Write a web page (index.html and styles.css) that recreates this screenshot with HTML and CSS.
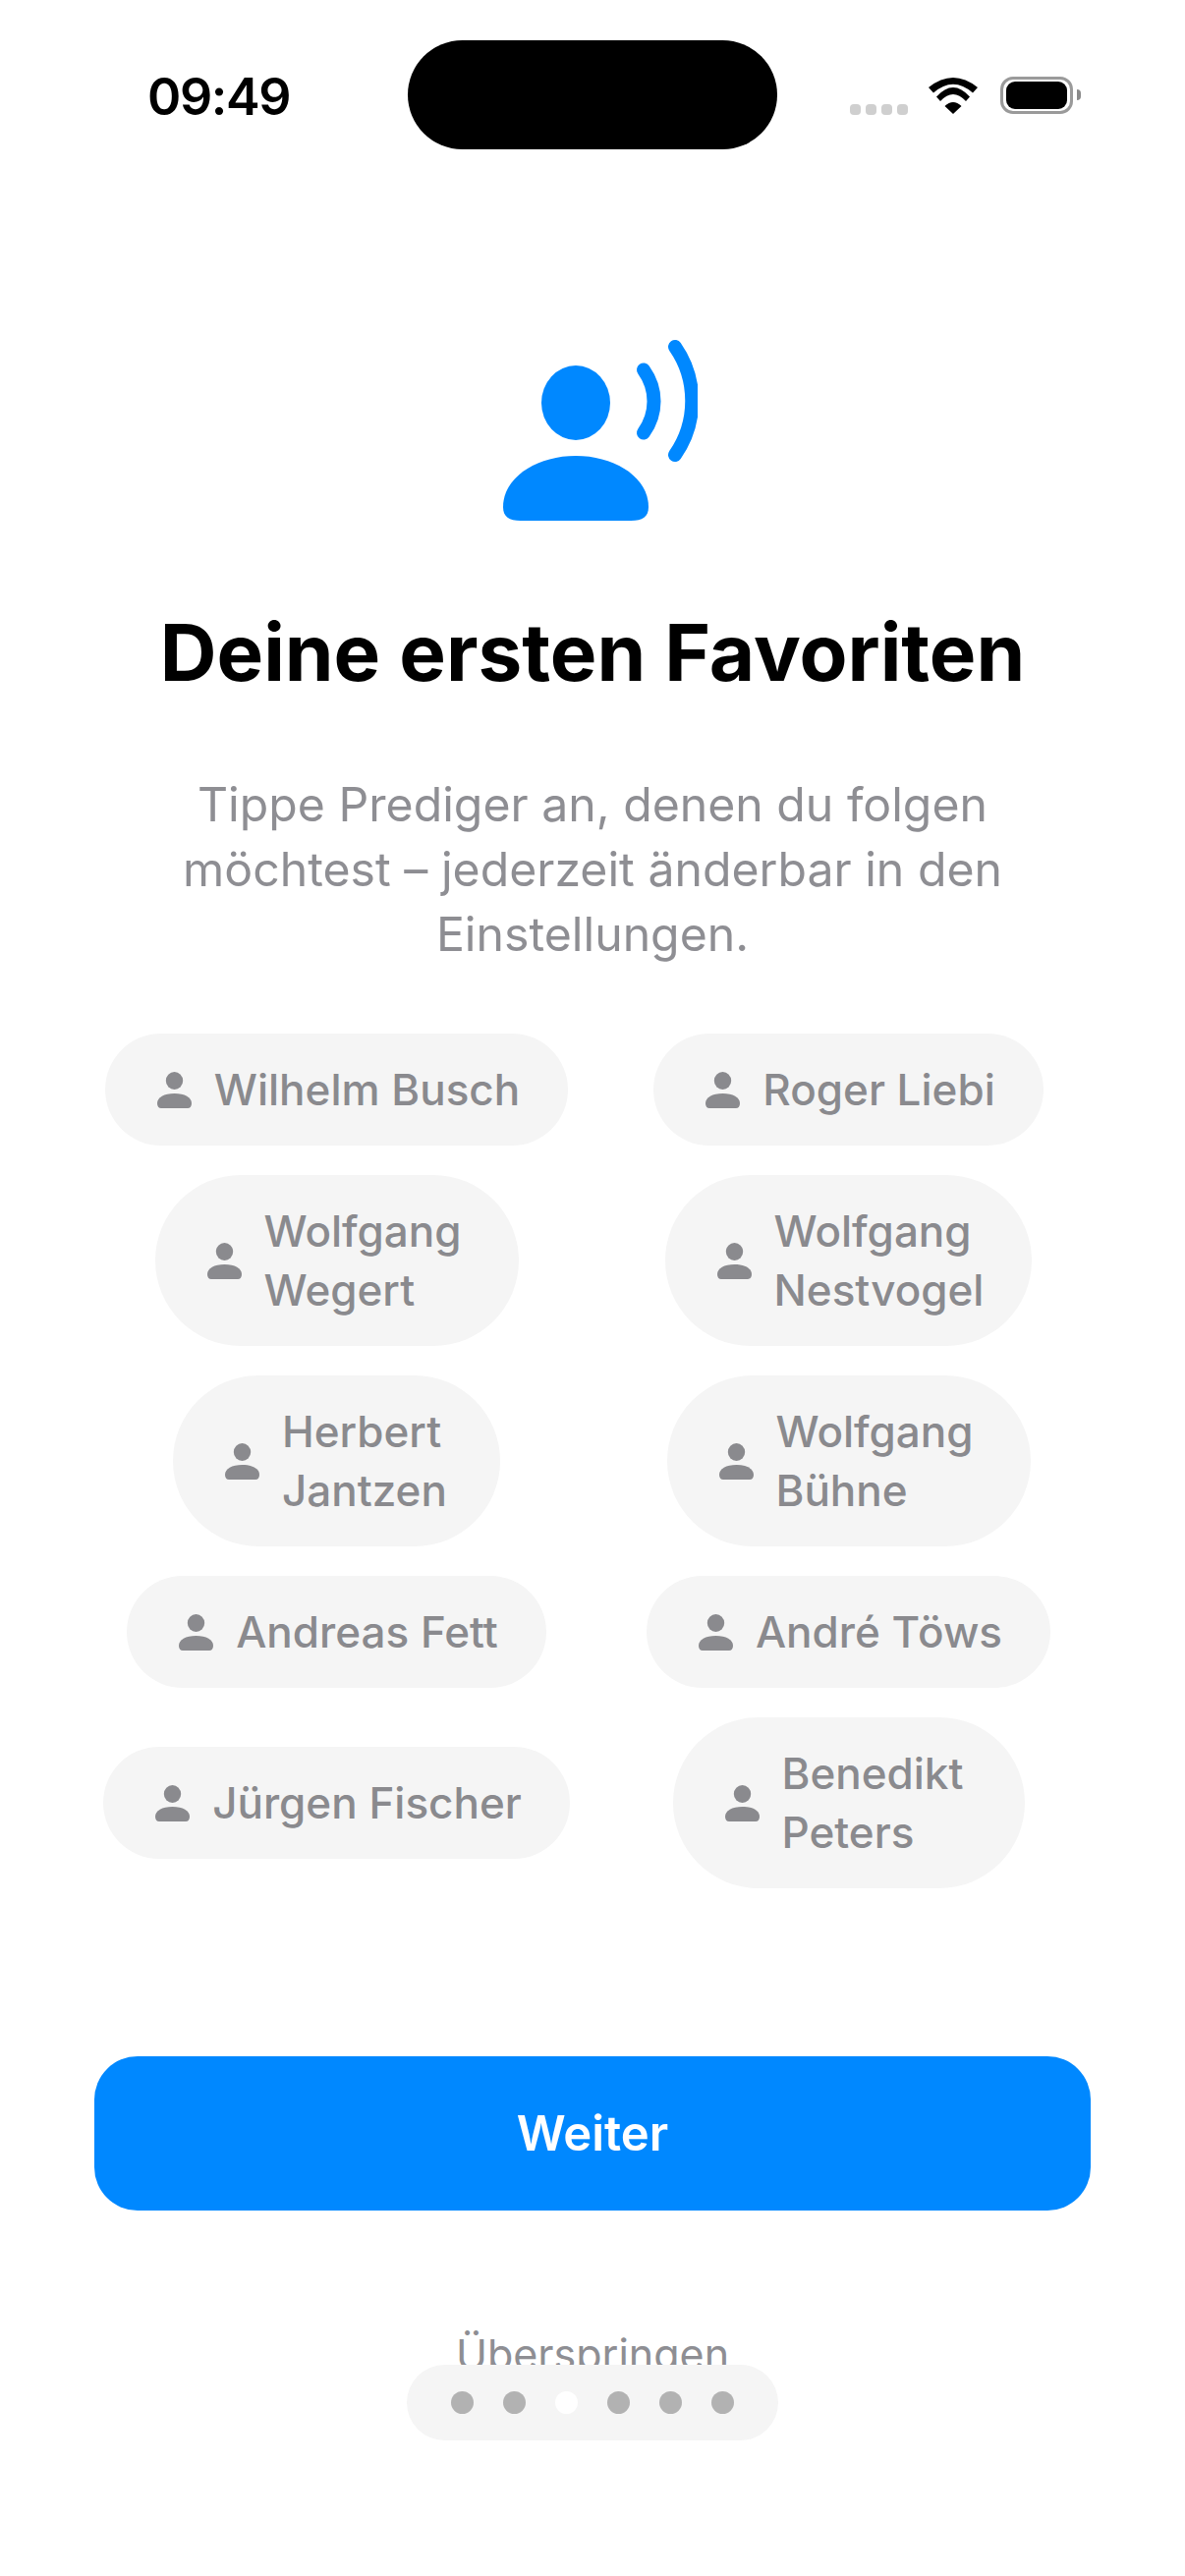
FILE: index.html
```html
<!DOCTYPE html>
<html lang="de">
<head>
<meta charset="utf-8">
<title>Deine ersten Favoriten</title>
<link rel="stylesheet" href="styles.css">
</head>
<body>
<div class="screen">
  <header class="status">
    <span class="time">09:49</span>
    <div class="island"></div>
    <div class="status-icons">
      <div class="signal"><i></i><i></i><i></i><i></i></div>
      <svg class="wifi" width="50" height="37" viewBox="0 0 50 37"><path d="M0 10Q25 -10 50 10L45 15.500Q25 -2 5 15.500ZM8 19.500Q25 0.500 42 19.500L38 24Q25 10 12 24ZM16.500 29Q25 21 33.500 29L25 37Z" fill="#000"/></svg>
      <div class="battery"><div class="battery-fill"></div></div>
      <div class="battery-nub"></div>
    </div>
  </header>
  <main class="content">
    <svg class="hero" width="200" height="196" viewBox="0 0 200 196">
      <ellipse cx="76" cy="72" rx="35" ry="38" fill="#0088ff"/>
      <path d="M2 178C2 148 36 126 76 126S150 148 150 178C150 188 144 192 132 192H20C8 192 2 188 2 178Z" fill="#0088ff"/>
      <path d="M145 38.500C159 58 159 83 145 102.500" fill="none" stroke="#0088ff" stroke-width="14" stroke-linecap="round"/>
      <path d="M177 15C200 48 200 92 177 125" fill="none" stroke="#0088ff" stroke-width="14" stroke-linecap="round"/>
    </svg>
    <h1 class="title">Deine ersten Favoriten</h1>
    <p class="lead">Tippe Prediger an, denen du folgen möchtest – jederzeit änderbar in den Einstellungen.</p>
    <div class="chips">
      <div class="chip"><svg class="person" viewBox="0 0 35 37"><use href="#person"/></svg><span>Wilhelm Busch</span></div>
      <div class="chip"><svg class="person" viewBox="0 0 35 37"><use href="#person"/></svg><span>Roger Liebi</span></div>
      <div class="chip"><svg class="person" viewBox="0 0 35 37"><use href="#person"/></svg><span class="name-wide">Wolfgang<br>Wegert</span></div>
      <div class="chip"><svg class="person" viewBox="0 0 35 37"><use href="#person"/></svg><span>Wolfgang<br>Nestvogel</span></div>
      <div class="chip"><svg class="person" viewBox="0 0 35 37"><use href="#person"/></svg><span class="name-narrow">Herbert<br>Jantzen</span></div>
      <div class="chip"><svg class="person" viewBox="0 0 35 37"><use href="#person"/></svg><span class="name-wide">Wolfgang<br>Bühne</span></div>
      <div class="chip"><svg class="person" viewBox="0 0 35 37"><use href="#person"/></svg><span>Andreas Fett</span></div>
      <div class="chip"><svg class="person" viewBox="0 0 35 37"><use href="#person"/></svg><span>André Töws</span></div>
      <div class="chip"><svg class="person" viewBox="0 0 35 37"><use href="#person"/></svg><span>Jürgen Fischer</span></div>
      <div class="chip"><svg class="person" viewBox="0 0 35 37"><use href="#person"/></svg><span class="name-mid">Benedikt<br>Peters</span></div>
    </div>
    <button class="next">Weiter</button>
    <div class="skip">Überspringen</div>
  </main>
  <nav class="pager">
    <i class="dot"></i><i class="dot"></i><i class="dot active"></i><i class="dot"></i><i class="dot"></i><i class="dot"></i>
  </nav>
  <svg class="defs" width="0" height="0"><defs><g id="person"><ellipse cx="17.500" cy="9" rx="8.700" ry="9" fill="#8a8a8e"/><path d="M0 32C0 26 7 22 17.500 22S35 26 35 32C35 35 33.500 37 31 37H4C1.500 37 0 35 0 32Z" fill="#8a8a8e"/></g></defs></svg>
</div>
</body>
</html>
```

FILE: styles.css
```css
* { box-sizing: border-box; }
html, body { margin: 0; padding: 0; background: #fff; }
.screen {
  position: relative;
  width: 1206px;
  height: 2622px;
  overflow: hidden;
  font-family: Inter, "Liberation Sans", sans-serif;
}
.status {
  position: relative;
  height: 152px;
  padding: 41px 0 0 150px;
}
.time {
  display: block;
  font-size: 52px;
  letter-spacing: -1.400px;
  font-weight: 600;
  line-height: 56px;
  margin-top: 30px;
  color: #000;
}
.island {
  position: absolute;
  left: 415px;
  top: 41px;
  width: 376px;
  height: 111px;
  border-radius: 56px;
  background: #000;
}
.status-icons {
  position: absolute;
  left: 865px;
  top: 78px;
  display: flex;
  align-items: flex-start;
}
.signal { display: flex; gap: 5px; margin: 28px 0 0 0; }
.signal i { width: 11px; height: 11px; border-radius: 4px; background: #cfcfcf; }
.wifi { margin: 1px 0 0 21px; }
.battery {
  width: 74px;
  height: 38px;
  margin-left: 23px;
  padding: 2px 3px;
  border: 3px solid #9a9a9a;
  border-radius: 13px;
}
.battery-fill { width: 100%; height: 100%; border-radius: 9px; background: #000; }
.battery-nub { width: 4px; height: 11px; margin: 13px 0 0 4px; border-radius: 0 4px 4px 0; background: #8a8a8a; }
.content {
  display: flex;
  flex-direction: column;
  align-items: center;
}
.hero { margin: 186px 0 0 14px; display: block; }
.title {
  margin: 84px 0 0;
  font-size: 80px;
  line-height: 92px;
  font-weight: 700;
  color: #000;
}
.lead {
  width: 900px;
  margin: 76px 0 0;
  font-size: 48.200px;
  line-height: 66px;
  text-align: center;
  color: #8e8e93;
}
.chips {
  display: grid;
  grid-template-columns: 490px 490px;
  column-gap: 31px;
  row-gap: 30px;
  justify-items: center;
  align-items: center;
  margin-top: 68px;
}
.chip {
  display: flex;
  align-items: center;
  gap: 23px;
  padding: 27px 49px 27px 53px;
  border-radius: 999px;
  background: #f5f5f5;
  font-size: 44px;
  line-height: 60px;
  font-weight: 500;
  color: #8a8a8e;
}
.name-wide { min-width: 210px; }
.name-mid { min-width: 198px; }
.name-narrow { min-width: 173px; }
.person { width: 35px; height: 37px; flex: none; }
.next {
  width: 1014px;
  height: 157px;
  margin-top: 171px;
  border: 0;
  border-radius: 44px;
  background: #0088ff;
  color: #fff;
  font-family: inherit;
  font-size: 49px;
  font-weight: 600;
}
.skip {
  margin-top: 118px;
  font-size: 43px;
  line-height: 56px;
  color: #8e8e93;
}
.pager {
  position: absolute;
  left: 414px;
  top: 2407px;
  width: 378px;
  height: 77px;
  display: flex;
  align-items: center;
  justify-content: center;
  gap: 30px;
  border-radius: 39px;
  background: #f5f5f5;
}
.dot { width: 23px; height: 23px; border-radius: 50%; background: #b2b2b2; }
.dot.active { background: #fff; }
.defs { position: absolute; }
```
